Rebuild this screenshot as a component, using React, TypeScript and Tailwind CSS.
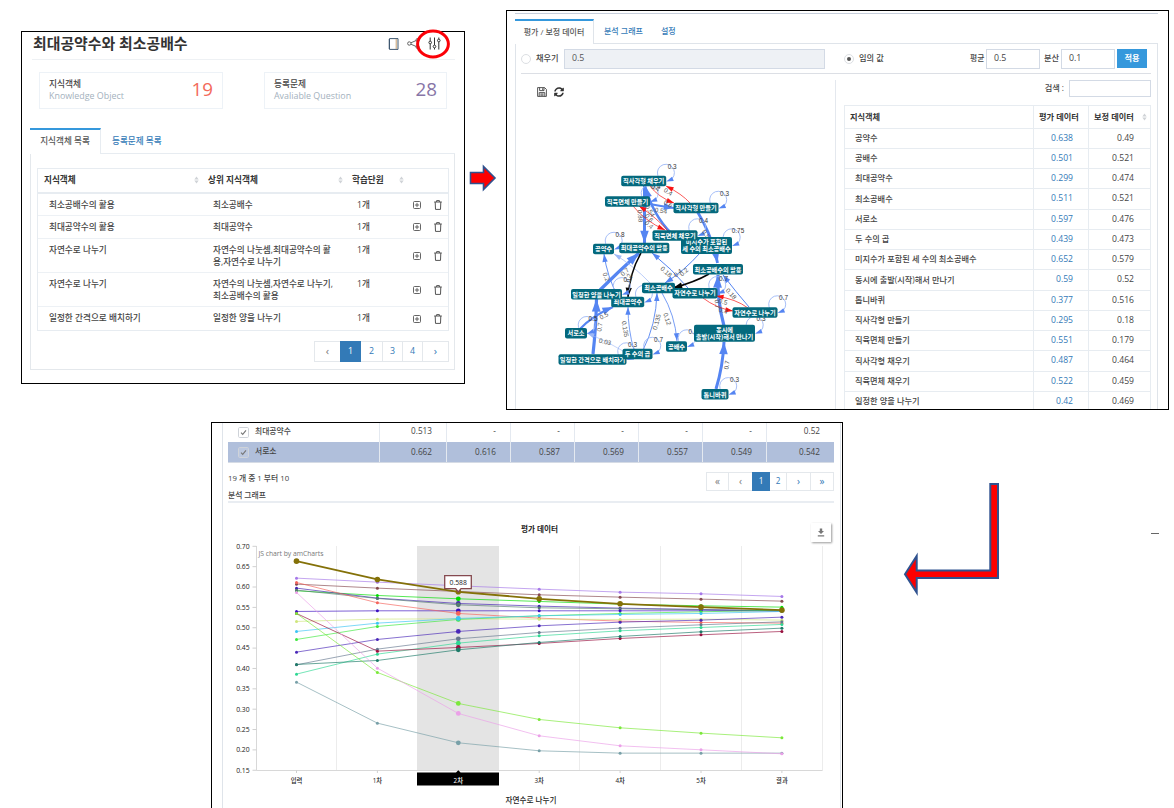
import React from "react";
import { FaSyncAlt } from "react-icons/fa";

type Pt = [number, number];

const Sort = () => (
  <svg width="5" height="8" viewBox="0 0 5 8" className="shrink-0">
    <path d="M2.5 0.6 4.7 3.4H0.3ZM2.5 7.4 4.7 4.6H0.3Z" fill="#d0d3d7" />
  </svg>
);

const PlusBox = () => (
  <svg width="8" height="8" viewBox="0 0 8 8" fill="none" stroke="#555" strokeWidth="0.9">
    <rect x="0.5" y="0.5" width="7" height="7" rx="1" />
    <path d="M4 1.9V6.1M1.9 4H6.1" />
  </svg>
);

const Trash = () => (
  <svg width="8" height="10" viewBox="0 0 8 10" fill="none" stroke="#555" strokeWidth="1">
    <path d="M0.2 2H7.8M2.6 2V0.6H5.4V2M1.2 2 1.5 9.4H6.5L6.8 2" />
  </svg>
);

const Floppy = () => (
  <svg width="10" height="10" viewBox="0 0 10 10" fill="none" stroke="#444" strokeWidth="0.9">
    <path d="M0.6 0.6H7.6L9.4 2.4V9.4H0.6ZM2.6 0.6V3.6H7V0.6M2.2 9.4V5.6H7.8V9.4M3.4 7H6.6M3.4 8.2H6.6" />
    <path d="M5.7 1.2V3" />
  </svg>
);

const conceptRows = [
  { name: "최소공배수의 활용", parent: ["최소공배수"], h: "h-[22px]" },
  { name: "최대공약수의 활용", parent: ["최대공약수"], h: "h-[23px]" },
  { name: "자연수로 나누기", parent: ["자연수의 나눗셈,최대공약수의 활", "용,자연수로 나누기"], h: "h-[34px]" },
  { name: "자연수로 나누기", parent: ["자연수의 나눗셈,자연수로 나누기,", "최소공배수의 활용"], h: "h-[34px]" },
  { name: "일정한 간격으로 배치하기", parent: ["일정한 양을 나누기"], h: "h-[23px]" },
];

function Stat({ ko, en, value, color }: { ko: string; en: string; value: string; color: string }) {
  return (
    <div className="flex h-[37px] items-center justify-between border border-[#edf2f7] pl-[9px] pr-[9px]">
      <div className="-mt-[2px] flex flex-col leading-[12px]">
        <span className="text-[8.7px] font-medium text-[#444]">{ko}</span>
        <span className="text-[8.9px] font-medium text-[#a3b1bd]">{en}</span>
      </div>
      <span className={`-mt-[3px] text-[18.8px] leading-none ${color}`}>{value}</span>
    </div>
  );
}

function ConceptPanel() {
  return (
    <section className="mt-[21px] flex h-[353px] w-[444px] shrink-0 flex-col border border-black pl-[8px] pr-[9px]">
      <header className="ml-[2px] flex h-[28px] items-center justify-between border-b border-[#eef1f4] pl-[1px] pr-[14px]">
        <h1 className="-mt-[4px] text-[14.9px] font-bold leading-none text-[#333]">최대공약수와 최소공배수</h1>
        <div className="relative -mt-[4px] flex items-center gap-[8px]">
          <svg width="11" height="12" viewBox="0 0 11 12" fill="none" strokeWidth="1">
            <path d="M1.5 0.6H10V11.4H1.5Z" stroke="#3f5870" />
            <path d="M8.2 1V11" stroke="#c8a070" />
            <path d="M0.4 2H2M0.4 4H2M0.4 6H2M0.4 8H2M0.4 10H2" stroke="#3f5870" strokeWidth="0.9" />
          </svg>
          <svg width="13" height="11" viewBox="0 0 13 11" fill="none" stroke="#555" strokeWidth="0.9">
            <circle cx="2.3" cy="5.5" r="1.7" />
            <circle cx="10.5" cy="2" r="1.5" />
            <circle cx="10.5" cy="9" r="1.5" />
            <path d="M3.9 4.8 9 2.6M3.9 6.2 9 8.4" />
          </svg>
          <svg width="13" height="13" viewBox="0 0 13 13" fill="none" stroke="#333" strokeWidth="1">
            <path d="M2.2 0.5V4M2.2 7V12.5M6.5 0.5V8M6.5 11V12.5M10.8 0.5V2M10.8 5V12.5" />
            <circle cx="2.2" cy="5.5" r="1.3" />
            <circle cx="6.5" cy="9.5" r="1.3" />
            <circle cx="10.8" cy="3.5" r="1.3" />
          </svg>
          <svg width="34" height="30" viewBox="0 0 34 30" className="absolute -right-[9px] -top-[8px]">
            <ellipse cx="17" cy="15" rx="15.4" ry="13" fill="none" stroke="#fb0007" strokeWidth="3" />
          </svg>
        </div>
      </header>
      <div className="ml-[9px] mt-[12px] grid w-[408px] grid-cols-[184px_183px] justify-between">
        <Stat ko="지식객체" en="Knowledge Object" value="19" color="text-[#f36a5a]" />
        <Stat ko="등록문제" en="Avaliable Question" value="28" color="text-[#8775a7]" />
      </div>
      <nav className="mt-[19px] flex h-[26px] text-[8.6px] font-medium">
        <div className="flex w-[71px] items-center justify-center border-r border-t-2 border-[#e7ecf1] border-t-[#3598dc] pb-[1px] text-[#555]">지식객체 목록</div>
        <div className="flex flex-1 items-center border-b border-[#e7ecf1] pl-[11px] pt-[1px] text-[#337ab7]">등록문제 목록</div>
      </nav>
      <div className="h-[216px] border border-t-0 border-[#e4e8ec] px-[5px] pt-[14px] pl-[6px] text-[8.65px] font-medium text-[#444]">
        <div className="border border-[#e7ecf1]">
          <div className="flex h-[25px] items-center border-b-2 border-[#e7ecf1] pl-[6px] font-bold text-[#333]">
            <span className="flex w-[164px] items-center justify-between pr-[9px]">지식객체<Sort /></span>
            <span className="flex w-[144px] items-center justify-between pr-[9px]">상위 지식객체<Sort /></span>
            <span className="flex w-[52px] items-center justify-between">학습단원<Sort /></span>
          </div>
          {conceptRows.map((r, i) => (
            <div key={i} className={`flex border-b border-[#edf1f5] pl-[11px] last:border-b-0 ${r.h}`}>
              <span className="w-[164px] pt-[5px] leading-[12px]">{r.name}</span>
              <span className="flex w-[144px] flex-col whitespace-nowrap pt-[5px] leading-[12px]">
                {r.parent.map((p) => (
                  <span key={p}>{p}</span>
                ))}
              </span>
              <span className="w-[56px] pt-[5px] leading-[12px]">1개</span>
              <span className="flex items-center gap-[13px]"><PlusBox /><Trash /></span>
            </div>
          ))}
        </div>
        <div className="mt-[10px] flex justify-end">
          <div className="grid h-[21px] grid-cols-[25px_21px_21px_20px_21px_25px] border border-[#e4e8ec] text-[8.8px] text-[#337ab7] [&>*]:flex [&>*]:items-center [&>*]:justify-center">
            <span className="text-[11px] text-[#777]">‹</span>
            <span className="-my-px bg-[#337ab7] text-white">1</span>
            <span>2</span>
            <span className="border-l border-[#e4e8ec]">3</span>
            <span className="border-x border-[#e4e8ec]">4</span>
            <span className="text-[11px]">›</span>
          </div>
        </div>
      </div>
    </section>
  );
}

const scoreRows = [
  ["공약수", "0.638", "0.49"],
  ["공배수", "0.501", "0.521"],
  ["최대공약수", "0.299", "0.474"],
  ["최소공배수", "0.511", "0.521"],
  ["서로소", "0.597", "0.476"],
  ["두 수의 곱", "0.439", "0.473"],
  ["미지수가 포함된 세 수의 최소공배수", "0.652", "0.579"],
  ["동시에 출발(시작)해서 만나기", "0.59", "0.52"],
  ["톱니바퀴", "0.377", "0.516"],
  ["직사각형 만들기", "0.295", "0.18"],
  ["직육면체 만들기", "0.551", "0.179"],
  ["직사각형 채우기", "0.487", "0.464"],
  ["직육면체 채우기", "0.522", "0.459"],
  ["일정한 양을 나누기", "0.42", "0.469"],
];

type Edge = { a: Pt; c: Pt; b: Pt; w: number; color: string };
const B = "#5585f2";
const L = "#9db8f6";
const R = "#f81414";
const K = "#050505";
const edges: Edge[] = [
  { a: [600, 290], c: [618, 272], b: [639, 253], w: 3.2, color: B },
  { a: [593, 354], c: [596, 328], b: [596.5, 299], w: 3.2, color: B },
  { a: [580, 329], c: [592, 316], b: [613, 307], w: 2.2, color: B },
  { a: [634, 350], c: [628, 330], b: [628, 307], w: 0.8, color: B },
  { a: [643, 350], c: [656, 325], b: [657, 293], w: 0.9, color: B },
  { a: [662, 293], c: [675, 315], b: [677, 341], w: 0.8, color: B },
  { a: [623, 351], c: [607, 341], b: [587, 333], w: 0.6, color: L },
  { a: [618, 297], c: [607, 276], b: [604, 254], w: 0.9, color: B },
  { a: [650, 283], c: [634, 266], b: [614, 254], w: 0.7, color: L },
  { a: [644.5, 186], c: [644.5, 215], b: [644.5, 243], w: 3, color: B },
  { a: [671, 233], c: [653, 215], b: [645, 186], w: 2.6, color: B },
  { a: [650, 204], c: [660, 206], b: [674, 208], w: 2, color: B },
  { a: [697, 211], c: [712, 235], b: [717.5, 263], w: 2.8, color: B },
  { a: [724, 326], c: [717, 300], b: [718, 275], w: 3.2, color: B },
  { a: [716, 389], c: [723, 366], b: [724, 342], w: 3, color: B },
  { a: [700, 253], c: [684, 271], b: [665, 283], w: 1, color: B },
  { a: [688, 288], c: [672, 269], b: [652, 253], w: 1, color: B },
  { a: [749, 307], c: [736, 292], b: [723, 275], w: 1, color: B },
  { a: [690, 203], c: [682, 194], b: [666, 186], w: 0.7, color: R },
  { a: [650, 186], c: [658, 197], b: [674, 203], w: 0.7, color: R },
  { a: [668, 231], c: [657, 218], b: [639, 206], w: 0.7, color: R },
  { a: [633, 206], c: [645, 221], b: [665, 230], w: 0.7, color: R },
  { a: [748, 308], c: [736, 299], b: [716, 296], w: 0.7, color: R },
  { a: [703, 298], c: [716, 308], b: [733, 311], w: 0.7, color: R },
  { a: [641, 253], c: [630, 272], b: [628, 297], w: 1.5, color: K },
  { a: [709, 274], c: [695, 282], b: [673, 288], w: 1.5, color: K },
];

const nodes: { x: number; y: number; w: number; t: string[]; loop?: string }[] = [
  { x: 706.5, y: 245.5, w: 51, t: ["미지수가 포함된", "세 수의 최소공배수"], loop: "0.75" },
  { x: 675, y: 235.5, w: 45, t: ["직육면체 채우기"], loop: "0.4" },
  { x: 643.7, y: 181, w: 45, t: ["직사각형 채우기"], loop: "0.3" },
  { x: 627.5, y: 201.5, w: 45, t: ["직육면체 만들기"], loop: "0.4" },
  { x: 696, y: 208, w: 45, t: ["직사각형 만들기"], loop: "0.3" },
  { x: 603.5, y: 249, w: 21, t: ["공약수"], loop: "0.8" },
  { x: 644.3, y: 248, w: 50, t: ["최대공약수의 활용"] },
  { x: 718, y: 269.3, w: 50, t: ["최소공배수의 활용"] },
  { x: 658.5, y: 288, w: 33, t: ["최소공배수"] },
  { x: 695, y: 293.2, w: 45, t: ["자연수로 나누기"], loop: "0.7" },
  { x: 627.7, y: 302, w: 33, t: ["최대공약수"], loop: "-" },
  { x: 596.5, y: 294.3, w: 51, t: ["일정한 양을 나누기"], loop: "0.7" },
  { x: 576, y: 333.2, w: 22, t: ["서로소"], loop: "0.5" },
  { x: 592.5, y: 359.5, w: 68, t: ["일정한 간격으로 배치하기"], loop: "0.3" },
  { x: 637.5, y: 354, w: 30, t: ["두 수의 곱"], loop: "0.7" },
  { x: 676.5, y: 346.5, w: 21, t: ["공배수"], loop: "0.6" },
  { x: 724.5, y: 333.2, w: 61, t: ["동시에", "출발(시작)해서 만나기"], loop: "0.3" },
  { x: 755, y: 312.5, w: 45, t: ["자연수로 나누기"], loop: "0.7" },
  { x: 715, y: 394.3, w: 27, t: ["톱니바퀴"], loop: "0.3" },
];

const edgeLabels: [number, number, number, string][] = [
  [668, 192, 32, "0.4"], [668, 204, 28, "0.6"], [661, 211, 8, "0.54"],
  [655, 188, 25, "0.4"], [640, 216, 86, "0.88"], [650, 211, 60, "0.54"],
  [649, 218, 50, "0.6"], [649, 225, 42, "0.4"],
  [606, 277, 70, "0.2"], [625, 272, -42, "0.7"], [629, 278, -80, "0.2"],
  [600, 327, -82, "0.7"], [604, 316, -28, "0.5"], [625, 329, 80, "0.135"],
  [657, 322, -75, "0.135"], [667, 319, 72, "0.12"], [605, 342, 14, "0.03"],
  [666, 272, 42, "0.18"], [684, 272, -40, "0.2"], [678, 273, -40, "0.4"],
  [731, 294, 48, "0.18"], [723, 302, 12, "0.5"], [723, 311, 14, "0.4"],
  [717, 304, 86, "0.7"], [727, 365, -80, "0.7"], [706, 234, 55, "0.5"],
];

function Head({ from, to, w, color }: { from: Pt; to: Pt; w: number; color: string }) {
  const ang = Math.atan2(to[1] - from[1], to[0] - from[0]);
  const len = 6.2 + w * 2;
  const half = 2 + w * 0.75;
  const bx = to[0] - len * Math.cos(ang);
  const by = to[1] - len * Math.sin(ang);
  const dx = half * Math.sin(ang);
  const dy = half * Math.cos(ang);
  return <polygon points={`${to[0]},${to[1]} ${bx + dx},${by - dy} ${bx - dx},${by + dy}`} fill={color} />;
}

function Graph() {
  const looped = nodes.filter((n) => n.loop);
  return (
    <svg width="319" height="310" viewBox="516 99 319 310" fontFamily="'Noto Sans CJK KR', sans-serif">
      {edges.map((e, i) => (
        <g key={i}>
          <path d={`M${e.a}Q${e.c} ${e.b}`} fill="none" stroke={e.color} strokeWidth={e.w} />
          <Head from={e.c} to={e.b} w={e.w} color={e.color} />
        </g>
      ))}
      {looped.map((n, i) => {
        const r = n.x + n.w / 2;
        return (
          <g key={i}>
            <path d={`M${r - 7} ${n.y - 3}A8.5 8.5 0 1 1 ${r + 6} ${n.y - 2.5}`} fill="none" stroke={L} strokeWidth="0.9" />
            <Head from={[r + 9, n.y - 3]} to={[r, n.y + 0.5]} w={0.5} color={B} />
          </g>
        );
      })}
      <g fontFamily="'Liberation Sans', sans-serif" fontSize="6.4" fill="#333" textAnchor="middle">
        {looped.filter((n) => n.loop !== "-").map((n, i) => (
          <text key={i} x={n.x + n.w / 2 + 6} y={n.y - 12.3}>{n.loop}</text>
        ))}
        {edgeLabels.map(([x, y, a, t], i) => (
          <text key={i} transform={`translate(${x} ${y}) rotate(${a})`} y="2" fill="#555">{t}</text>
        ))}
      </g>
      {nodes.map((n, i) => {
        const h = n.t.length > 1 ? 17 : 10.6;
        return (
          <g key={i}>
            <rect x={n.x - n.w / 2} y={n.y - h / 2} width={n.w} height={h} rx="2" fill="#04697d" />
            {n.t.map((t, j) => (
              <text key={j} x={n.x} y={n.y + 2.2 + (n.t.length > 1 ? (j ? 3.4 : -3.4) : 0)} fontSize="6.2" fontWeight="700" fill="#fff" textAnchor="middle">{t}</text>
            ))}
          </g>
        );
      })}
    </svg>
  );
}

function DataPanel() {
  return (
    <section className="flex h-[400px] w-[663px] shrink-0 flex-col overflow-hidden border border-black pl-[8px] pr-[10px] pt-[2px] text-[8.2px] font-medium text-[#444]">
      <div className="h-[6px] shrink-0 border-t border-[#c6cedb]" />
      <nav className="flex h-[25px] shrink-0">
        <div className="flex w-[79px] items-center justify-center whitespace-nowrap border-r border-t-2 border-[#dfe4ea] border-t-[#3598dc] pb-[2px] text-[8px] text-[#555]">평가 / 보정 데이터</div>
        <div className="flex flex-1 items-center gap-[18px] border-b border-[#dfe4ea] pl-[10px] text-[8px] text-[#337ab7]"><span>분석 그래프</span><span>설정</span></div>
      </nav>
      <div className="flex flex-1 flex-col border-x border-[#dfe4ea] pl-[5px] pr-[6px]">
        <div className="flex h-[30px] shrink-0 items-center border-b border-[#dcdfe5]">
          <span className="size-[10px] rounded-full border border-[#dcdfe3]" />
          <span className="ml-[5px] w-[28px]">채우기</span>
          <span className="flex h-[20px] w-[261px] items-center border border-[#d3dae5] bg-[#eef1f5] pl-[7px] text-[8.8px] text-[#555]">0.5</span>
          <span className="ml-[19px] flex size-[10px] items-center justify-center rounded-full border border-[#dcdfe3]"><i className="size-[4px] rounded-full bg-[#555]" /></span>
          <span className="ml-[5px] w-[111px]">임의 값</span>
          <span className="w-[16px] text-[7.8px]">평균</span>
          <span className="flex h-[20px] w-[54px] items-center border border-[#d3dae5] pl-[7px] text-[8.8px]">0.5</span>
          <span className="ml-[4px] w-[17px]">분산</span>
          <span className="flex h-[20px] w-[54px] items-center border border-[#d3dae5] pl-[7px] text-[8.8px]">0.1</span>
          <span className="ml-[2px] flex h-[19px] w-[30px] items-center justify-center bg-[#3598dc] font-bold text-white">적용</span>
        </div>
        <div className="-ml-[5px] flex flex-1">
          <div className="flex w-[319px] flex-col">
            <div className="flex h-[25px] items-end gap-[7px] pb-[2px] pl-[21px]">
              <Floppy />
              <FaSyncAlt size={10} color="#333" />
            </div>
            <Graph />
          </div>
          <div className="mt-[6px] flex flex-1 flex-col border-l border-[#e4e8ee] pl-[8px]">
            <div className="flex h-[17px] shrink-0 items-center justify-end gap-[5px]">검색 :<span className="h-[17px] w-[82px] border border-[#d3dae5]" /></div>
            <div className="mt-[8px] flex flex-col border-x border-t border-[#e7ecf1]">
              <div className="grid h-[22.5px] grid-cols-[189px_55px_1fr] border-b border-[#e7ecf1] font-bold text-[#333]">
                <span className="flex items-center border-r border-[#e7ecf1] pl-[5px]">지식객체</span>
                <span className="flex items-center border-r border-[#e7ecf1] pl-[5px]">평가 데이터</span>
                <span className="flex items-center justify-between pl-[5px] pr-[3px]">보정 데이터<Sort /></span>
              </div>
              {scoreRows.map(([n, a, b]) => (
                <div key={n} className="grid h-[20.25px] grid-cols-[189px_55px_1fr] border-b border-[#e7ecf1]">
                  <span className="flex items-center border-r border-[#e7ecf1] pl-[10px]">{n}</span>
                  <span className="flex items-center justify-end border-r border-[#e7ecf1] pr-[15px] text-[8.6px] text-[#337ab7]">{a}</span>
                  <span className="flex items-center justify-end pr-[16px] text-[8.6px]">{b}</span>
                </div>
              ))}
            </div>
          </div>
        </div>
      </div>
    </section>
  );
}

const series: { color: string; w?: number; y: number[] }[] = [
  { color: "#a678e8", y: [130, 142, 153, 163, 172, 177, 185] },
  { color: "#85494f", y: [148, 160, 170, 180, 187, 193, 199] },
  { color: "#00dd00", y: [168, 182, 192, 200, 208, 213, 217] },
  { color: "#4120b0", y: [160, 190, 206, 214, 220, 224, 228] },
  { color: "#557a70", y: [166, 191, 210, 219, 222, 225, 229] },
  { color: "#3c10c0", y: [230, 228, 228, 228, 228, 228, 228] },
  { color: "#f4645c", y: [143, 204, 236, 250, 259, 263, 265] },
  { color: "#cfe67c", y: [260, 253, 252, 253, 254, 253, 256] },
  { color: "#3fe83f", y: [314, 275, 254, 243, 236, 231, 226] },
  { color: "#3cc4f4", y: [290, 265, 251, 243, 239, 236, 230] },
  { color: "#4a28b8", y: [352, 314, 290, 273, 262, 256, 247] },
  { color: "#66788f", y: [390, 343, 312, 293, 280, 270, 261] },
  { color: "#2fd894", y: [418, 358, 325, 303, 288, 278, 269] },
  { color: "#98113f", y: [236, 349, 338, 326, 311, 300, 290] },
  { color: "#1d7a68", y: [389, 377, 345, 323, 305, 291, 280] },
  { color: "#7be83a", y: [236, 413, 506, 554, 579, 595, 609] },
  { color: "#78a0a8", y: [442, 565, 624, 648, 655, 655, 655] },
  { color: "#eba0e8", y: [173, 400, 536, 603, 633, 645, 657] },
  { color: "#847108", w: 1.8, y: [79, 134, 171, 192, 207, 217, 226] },
];
const px = (i: number) => 296.5 + i * 80.9;
const py = (v: number) => 534.8 + v / 3;
const ticks = ["0.70", "0.65", "0.60", "0.55", "0.50", "0.45", "0.40", "0.35", "0.30", "0.25", "0.20", "0.15"];
const cats = ["입력", "1차", "2차", "3차", "4차", "5차", "결과"];

function Chart() {
  return (
    <svg width="618" height="305" viewBox="223 503 618 305" fontFamily="'Open Sans', 'Noto Sans CJK KR', sans-serif" fontSize="6.8" fill="#222">
      <text x="539.5" y="532" fontSize="7.6" fontWeight="700" textAnchor="middle">평가 데이터</text>
      <rect x="417" y="546" width="82" height="224.5" fill="#e4e4e4" />
      {[336.5, 579.5, 660.5, 741.5, 822.5].map((x) => (
        <path key={x} d={`M${x} 546V770.5`} stroke="#ececec" strokeWidth="1" />
      ))}
      <path d="M256.5 546V770.5H822.5" fill="none" stroke="#d8d8d8" />
      {ticks.map((t, i) => (
        <g key={t}>
          <path d={`M252.5 ${546.3 + i * 20.36}H256.5`} stroke="#d0d0d0" />
          <text x="249.6" y={548.5 + i * 20.38} textAnchor="end">{t}</text>
        </g>
      ))}
      <text x="258.5" y="555.5" fill="#777" textLength="65">JS chart by amCharts</text>
      {series.map((s, k) => (
        <g key={k}>
          <polyline points={s.y.map((v, i) => `${px(i)},${py(v)}`).join(" ")} fill="none" stroke={s.color} strokeWidth={s.w ?? 0.95} strokeOpacity={s.w ? 1 : 0.7} />
          {s.y.map((v, i) => (
            <circle key={i} cx={px(i)} cy={py(v)} r={s.w ? 2.8 : i === 2 ? 2.4 : 1.5} fill={s.color} />
          ))}
        </g>
      ))}
      <path d="M444.7 575.7H471.3V588.7H461L458.3 592 455.6 588.7H444.7Z" fill="#fff" stroke="#85494f" strokeWidth="1.3" />
      <text x="458.2" y="584.8" textAnchor="middle">0.588</text>
      <path d="M417 772.5H456L458.3 770.2 460.6 772.5H499V785.5H417Z" fill="#000" />
      {cats.map((c, i) => (
        <g key={c}>
          {i !== 2 && <path d={`M${px(i)} 770.5V773`} stroke="#d0d0d0" />}
          <text x={px(i)} y={783} textAnchor="middle" fontSize="6.3" fontWeight="500" fill={i === 2 ? "#fff" : "#222"}>{c}</text>
        </g>
      ))}
      <text x="531" y="802.5" fontSize="7.6" fontWeight="500" textAnchor="middle">자연수로 나누기</text>
    </svg>
  );
}

const resultRows = [
  { name: "최대공약수", v: ["0.513", "-", "-", "-", "-", "-", "0.52"], on: false },
  { name: "서로소", v: ["0.662", "0.616", "0.587", "0.569", "0.557", "0.549", "0.542"], on: true },
];

function AnalysisPanel() {
  return (
    <section className="ml-[211px] h-[400px] w-[632px] shrink-0 border border-black px-[10px] pr-0 text-[7.8px] font-medium text-[#444]">
      <div className="flex h-full w-[619px] flex-col border-x border-[#dfe4ea]">
        <div className="ml-[5px] w-[606px]">
          {resultRows.map((r) => (
            <div key={r.name} className={`grid grid-cols-[152px_67px_64px_64px_64px_64px_64px_1fr] ${r.on ? "h-[21px] border-b border-[#d5dbe5] bg-[#b0bfdb]" : "h-[19px]"}`}>
              <span className={`flex items-center gap-[6px] border-r border-[#e4e9f0] pl-[10px] ${r.on ? "" : "pb-[1px]"}`}>
                <svg width="11" height="11" viewBox="0 0 11 11" fill="none">
                  <rect x="0.5" y="0.5" width="10" height="10" rx="1.2" stroke="#cfd3d9" fill={r.on ? "#bcc8df" : "#fff"} />
                  <path d="M3 5.7 4.7 7.4 8 3.4" stroke="#777" strokeWidth="1.1" />
                </svg>
                {r.name}
              </span>
              {r.v.map((v, i) => (
                <span key={i} className={`flex items-center justify-end pr-[14px] text-[8.2px] ${i < 6 ? "border-r border-[#e4e9f0]" : ""} ${r.on ? "" : "pb-[2px]"}`}>{v}</span>
              ))}
            </div>
          ))}
          <div className="mt-[9px] flex h-[19px] justify-between">
            <span className="leading-[13px]">19 개 중 1 부터 10</span>
            <div className="grid h-[19px] grid-cols-[22px_23px_18px_17px_24px_22px] border border-[#e4e8ec] text-[8.2px] text-[#337ab7] [&>*]:flex [&>*]:items-center [&>*]:justify-center">
              <span className="border-r border-[#e4e8ec] text-[10px] text-[#777]">«</span>
              <span className="text-[10px] text-[#777]">‹</span>
              <span className="-my-px bg-[#337ab7] text-white">1</span>
              <span className="border-r border-[#e4e8ec]">2</span>
              <span className="border-r border-[#e4e8ec] text-[10px]">›</span>
              <span className="text-[10px]">»</span>
            </div>
          </div>
          <div className="flex h-[12px] items-center border-b-2 border-[#e9edf2]">분석 그래프</div>
        </div>
        <div className="relative">
          <Chart />
          <div className="absolute left-[588px] top-[20px] flex h-[19px] w-[20px] items-center justify-center bg-white shadow-[1px_1px_2px_rgba(0,0,0,0.4)]">
            <svg width="8" height="9" viewBox="0 0 8 9" fill="#777"><path d="M2.8 0.5H5.2V3H7L4 6 1 3H2.8ZM0.8 7.2H7.2V8.4H0.8Z" /></svg>
          </div>
        </div>
      </div>
    </section>
  );
}

export default function App() {
  return (
    <main className="h-[808px] w-[1174px] overflow-hidden bg-white font-['Open_Sans','Noto_Sans_CJK_KR',sans-serif]">
      <div className="flex h-[412px] pl-[21px] pt-[10px]">
        <ConceptPanel />
        <svg width="41" height="40" viewBox="465 158 41 40" className="mt-[148px] shrink-0">
          <path d="M470.5 172.5H483.5V166.5L495 178 483.5 189.5V183.5H470.5Z" fill="#fe0000" stroke="#2f528f" strokeWidth="1.6" />
        </svg>
        <DataPanel />
      </div>
      <div className="flex pt-[10px]">
        <AnalysisPanel />
        <svg width="331" height="386" viewBox="843 422 331 386" className="shrink-0">
          <path d="M990.3 484H998V578H916.7V592.5L905 574.2 916.7 556V570.5H990.3Z" fill="#fe0000" stroke="#2f528f" strokeWidth="2" />
          <path d="M1151 533.5H1159" stroke="#666" />
        </svg>
      </div>
    </main>
  );
}
